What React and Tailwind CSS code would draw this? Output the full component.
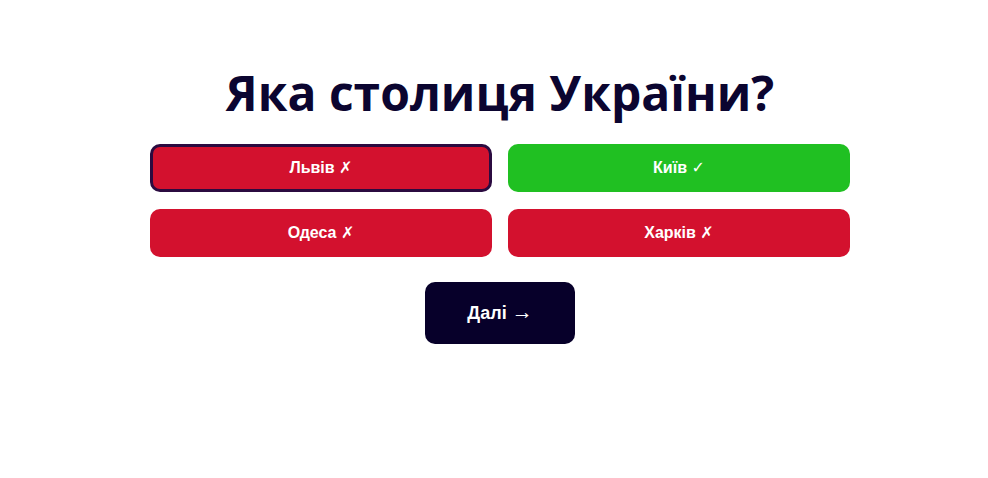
import React from 'react';

const options = [
  { label: 'Львів', mark: '✗', correct: false, picked: true },
  { label: 'Київ', mark: '✓', correct: true, picked: false },
  { label: 'Одеса', mark: '✗', correct: false, picked: false },
  { label: 'Харків', mark: '✗', correct: false, picked: false },
];

export default function App() {
  return (
    <div className="min-h-screen bg-white flex justify-center pl-3 pt-[64px]">
      <div className="w-[700px] flex flex-col items-center">
        <h1 className="text-[48px] leading-[58px] font-bold text-[#0b0530] font-['Open_Sans',sans-serif]">
          Яка столиця України?
        </h1>
        <div className="grid grid-cols-2 gap-x-[16px] gap-y-[17px] w-full mt-[22px]">
          {options.map((o) => (
            <button
              key={o.label}
              className={`h-[48px] rounded-[10px] text-white font-bold text-[16px] font-['Liberation_Sans',Arial,sans-serif]
                ${o.correct ? 'bg-[#20c022]' : 'bg-[#d3112e]'}
                ${o.picked ? 'border-[3px] border-[#2b0b40]' : ''}`}
            >
              {o.label} <span className="font-normal font-['DejaVu_Sans',sans-serif]">{o.mark}</span>
            </button>
          ))}
        </div>
        <button className="mt-[25px] w-[150px] h-[62px] rounded-[10px] bg-[#07002a] text-white font-bold text-[18px] font-['Liberation_Sans',Arial,sans-serif]">
          Далі <span className="font-normal text-[21px] leading-none">→</span>
        </button>
      </div>
    </div>
  );
}
